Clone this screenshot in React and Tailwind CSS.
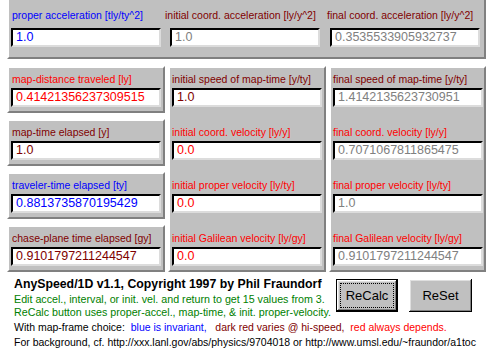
const BLUE = "text-[#0000ff]";
const RED = "text-[#ff0000]";
const DARK = "text-[#800000]";
const GRAY = "text-[#808080]";

function Field({ label, value, lc, vc, off = "pl-[3px]" }) {
  return (
    <div className="h-[43px] pt-[5px]">
      <div className={`text-[10.5px] leading-[13px] whitespace-nowrap ${off} ${lc}`}>{label}</div>
      <Box value={value} vc={vc} className="mt-[2px]" />
    </div>
  );
}

function Box({ value, vc, className = "" }) {
  return (
    <div
      className={`ml-[2px] w-[150px] h-[19px] bg-white border-t-2 border-l-2 border-t-black border-l-black border-r-2 border-b-2 border-r-[#dcdcdc] border-b-[#dcdcdc] pl-[3px] text-[12.5px] leading-[15px] whitespace-nowrap overflow-hidden ${vc} ${className}`}
    >
      {value}
    </div>
  );
}

const raised = "bg-[#c0c0c0] border-2 border-t-white border-l-white border-r-[#808080] border-b-[#808080]";

const left = [
  ["map-distance traveled [ly]", "0.41421356237309515", RED, RED],
  ["map-time elapsed [y]", "1.0", DARK, DARK],
  ["traveler-time elapsed [ty]", "0.8813735870195429", BLUE, BLUE],
  ["chase-plane time elapsed [gy]", "0.9101797211244547", DARK, DARK],
];

const mid = [
  ["initial speed of map-time [y/ty]", "1.0", DARK, DARK],
  ["initial coord. velocity [ly/y]", "0.0", RED, RED],
  ["initial proper velocity [ly/ty]", "0.0", RED, RED],
  ["initial Galilean velocity [ly/gy]", "0.0", RED, RED],
];

const right = [
  ["final speed of map-time [y/ty]", "1.4142135623730951", DARK, GRAY],
  ["final coord. velocity [ly/y]", "0.7071067811865475", RED, GRAY],
  ["final proper velocity [ly/ty]", "1.0", RED, GRAY],
  ["final Galilean velocity [ly/gy]", "0.9101797211244547", RED, GRAY],
];

const btnShadow =
  "bg-[#c0c0c0] shadow-[inset_-1px_-1px_0_#000,inset_1px_1px_0_#fff,inset_-2px_-2px_0_#808080,inset_2px_2px_0_#dfdfdf]";

export default function App() {
  return (
    <div className="w-[496px] h-[354px] bg-white overflow-hidden font-['Liberation_Sans',Arial,sans-serif] text-black">
      <div className="pl-[7px]">
        {/* top band */}
        <div className="w-[479px] h-[59px] bg-[#c0c0c0] border-l-2 border-l-white border-r-2 border-b-2 border-r-[#808080] border-b-[#808080] grid grid-cols-[156px_161px_158px] pt-[9px]">
          <div>
            <div className={`text-[10.5px] leading-[13px] whitespace-nowrap pl-[3px] ${BLUE}`}>proper acceleration [tly/ty^2]</div>
            <Box value="1.0" vc={BLUE} className="mt-[6px]" />
          </div>
          <div>
            <div className={`text-[10.5px] leading-[13px] whitespace-nowrap pl-[0px] ${DARK}`}>initial coord. acceleration [ly/y^2]</div>
            <Box value="1.0" vc={GRAY} className="mt-[6px] ml-[5px]" />
          </div>
          <div>
            <div className={`text-[10.5px] leading-[13px] whitespace-nowrap pl-[1px] ${DARK}`}>final coord. acceleration [ly/y^2]</div>
            <Box value="0.3535533905932737" vc={GRAY} className="mt-[6px] ml-[4px]" />
          </div>
        </div>

        {/* second row */}
        <div className="mt-[7px] grid grid-cols-[158px_158px_157px] gap-x-[3px] w-[479px]">
          <div className="flex flex-col gap-[6px]">
            {left.map(([l, v, lc, vc]) => (
              <div key={l} className={raised}>
                <Field label={l} value={v} lc={lc} vc={vc} />
              </div>
            ))}
          </div>
          <div className={`${raised} flex flex-col gap-[10px] h-[206px]`}>
            {mid.map(([l, v, lc, vc]) => (
              <Field key={l} label={l} value={v} lc={lc} vc={vc} off="pl-[2px]" />
            ))}
          </div>
          <div className={`${raised} flex flex-col gap-[10px] h-[206px]`}>
            {right.map(([l, v, lc, vc]) => (
              <Field key={l} label={l} value={v} lc={lc} vc={vc} off="pl-[2px]" />
            ))}
          </div>
        </div>
      </div>

      {/* bottom */}
      <div className="flex mt-[5px]">
        <div className="pl-[14px] w-[336px]">
          <div className="text-[12.3px] leading-[14px] font-bold whitespace-nowrap">
            AnySpeed/1D v1.1, Copyright 1997 by Phil Fraundorf
          </div>
          <div className="mt-[2px] text-[10.7px] leading-[13px] text-[#008000] whitespace-nowrap">
            Edit accel., interval, or init. vel. and return to get 15 values from 3.
          </div>
          <div className="text-[10.7px] leading-[13px] text-[#008000] whitespace-nowrap">
            ReCalc button uses proper-accel., map-time, &amp; init. proper-velocity.
          </div>
        </div>
        <div className="flex gap-[11px] mt-[2px]">
          <button className="w-[62px] h-[33px] border border-black bg-[#c0c0c0] p-0">
            <div className={`h-full w-full p-[3px] ${btnShadow}`}>
              <div className="h-full w-full border border-dotted border-black flex items-center justify-center text-[13px]">
                ReCalc
              </div>
            </div>
          </button>
          <button className={`w-[63px] h-[33px] flex items-center justify-center text-[13px] ${btnShadow}`}>
            ReSet
          </button>
        </div>
      </div>
      <div className="pl-[14px] mt-[1px] text-[10.5px] leading-[14px] whitespace-nowrap">
        With map-frame choice:&nbsp;&nbsp;<span className="text-[#0000ff]">blue is invariant,</span>
        &nbsp;&nbsp;&nbsp;<span className="text-[#800000]">dark red varies @ hi-speed,</span>&nbsp;&nbsp;
        <span className="text-[#ff0000]">red always depends.</span>
      </div>
      <div className="pl-[14px] mt-[1px] text-[10.5px] leading-[14px] whitespace-nowrap">
        For background, cf. http://xxx.lanl.gov/abs/physics/9704018 or http://www.umsl.edu/~fraundor/a1toc
      </div>
    </div>
  );
}
